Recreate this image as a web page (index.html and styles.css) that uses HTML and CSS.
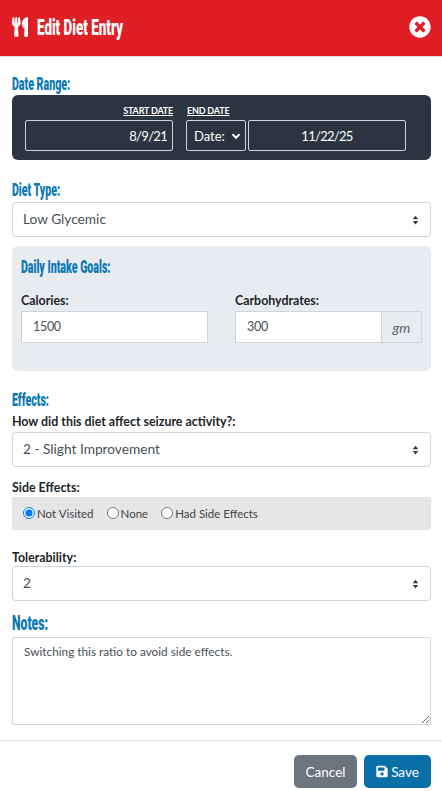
FILE: index.html
```html
<!DOCTYPE html>
<html lang="en">
<head>
<meta charset="utf-8">
<title>Edit Diet Entry</title>
<link rel="stylesheet" href="styles.css">
</head>
<body>
<header class="modal-header">
  <svg class="icon-utensils" viewBox="0 0 416 512"><path fill="#fff" d="M207.9 15.2c.8 4.7 16.1 94.5 16.1 128.8 0 52.3-27.8 89.6-68.9 104.6L168 486.7c.7 13.7-10.2 25.3-24 25.3H80c-13.7 0-24.7-11.5-24-25.3l12.9-238.1C27.7 233.6 0 196.2 0 144 0 109.6 15.3 19.9 16.1 15.2 19.3-5.1 61.4-5.4 64 16.3v141.2c1.3 3.4 15.1 3.2 16 0 1.4-25.3 7.9-139.2 8-141.8 3.3-20.8 44.7-20.8 47.9 0 .2 2.7 6.6 116.5 8 141.8.9 3.2 14.8 3.4 16 0V16.3c2.6-21.6 44.8-21.4 48-1.1zm119.2 285.7l-15 185.1c-1.2 14 9.9 26 23.9 26h56c13.3 0 24-10.7 24-24V24c0-13.2-10.7-24-24-24-82.5 0-221.4 178.5-64.9 300.9z"/></svg>
  <h1 class="modal-title">Edit Diet Entry</h1>
  <svg class="icon-close" viewBox="0 0 512 512"><path fill="#fff" d="M256 8C119 8 8 119 8 256s111 248 248 248 248-111 248-248S393 8 256 8zm121.6 313.1c4.7 4.7 4.7 12.3 0 17L338 377.6c-4.7 4.7-12.3 4.7-17 0L256 312l-65.1 65.6c-4.7 4.7-12.3 4.7-17 0L134.4 338c-4.7-4.7-4.7-12.3 0-17l65.6-65-65.6-65.1c-4.7-4.7-4.7-12.3 0-17l39.6-39.6c4.7-4.7 12.3-4.7 17 0l65 65.7 65.1-65.6c4.7-4.7 12.3-4.7 17 0l39.6 39.6c4.7 4.7 4.7 12.3 0 17L312 256l65.6 65.1z"/></svg>
</header>

<main class="modal-body">
  <h2 class="section"><span>Date Range:</span></h2>
  <section class="date-panel">
    <div class="date-start">
      <span class="date-label">START DATE</span>
      <input class="date-input align-right" type="text" value="8/9/21">
    </div>
    <div class="date-end">
      <span class="date-label">END DATE</span>
      <div class="date-end-row">
        <select class="date-select"><option>Date:</option></select>
        <input class="date-input date-input-end" type="text" value="11/22/25">
      </div>
    </div>
  </section>

  <h2 class="section section-diet"><span>Diet Type:</span></h2>
  <select class="control select"><option>Low Glycemic</option></select>

  <section class="goals">
    <h3 class="section section-goals"><span>Daily Intake Goals:</span></h3>
    <div class="goals-grid">
      <div class="goal goal-cal">
        <label class="field-label">Calories:</label>
        <input class="goal-input" type="text" value="1500">
      </div>
      <div class="goal goal-carb">
        <label class="field-label">Carbohydrates:</label>
        <div class="input-group">
          <input class="goal-input grouped" type="text" value="300">
          <span class="addon">gm</span>
        </div>
      </div>
    </div>
  </section>

  <h2 class="section section-effects"><span>Effects:</span></h2>
  <label class="field-label label-how">How did this diet affect seizure activity?:</label>
  <select class="control select"><option>2 - Slight Improvement</option></select>

  <label class="field-label label-side">Side Effects:</label>
  <div class="radio-bar">
    <label class="radio"><input type="radio" name="side" checked>Not Visited</label>
    <label class="radio"><input type="radio" name="side">None</label>
    <label class="radio"><input type="radio" name="side">Had Side Effects</label>
  </div>

  <label class="field-label label-tol">Tolerability:</label>
  <select class="control select"><option>2</option></select>

  <h2 class="section section-notes"><span>Notes:</span></h2>
  <textarea class="notes">Switching this ratio to avoid side effects.</textarea>
</main>

<footer class="modal-footer">
  <button class="btn btn-cancel" type="button">Cancel</button>
  <button class="btn btn-save" type="button"><svg class="icon-save" viewBox="0 0 448 512"><path fill="#fff" d="M433.941 129.941l-83.882-83.882A48 48 0 0 0 316.118 32H48C21.49 32 0 53.49 0 80v352c0 26.51 21.49 48 48 48h352c26.51 0 48-21.49 48-48V163.882a48 48 0 0 0-14.059-33.941zM224 416c-35.346 0-64-28.654-64-64 0-35.346 28.654-64 64-64s64 28.654 64 64c0 35.346-28.654 64-64 64zm96-304.52V212c0 6.627-5.373 12-12 12H76c-6.627 0-12-5.373-12-12V108c0-6.627 5.373-12 12-12h228.52c3.183 0 6.235 1.264 8.485 3.515l3.48 3.48A11.996 11.996 0 0 1 320 111.48z"/></svg>Save</button>
</footer>
</body>
</html>
```

FILE: styles.css
```css
* { box-sizing: border-box; }
html, body { margin: 0; padding: 0; height: 791px; overflow: hidden; }
body {
  background: #fff;
  font-family: Lato, "Noto Sans", sans-serif;
  font-size: 14px;
  color: #212529;
}

.modal-header {
  height: 57px;
  background: #e01e26;
  border-bottom: 1px solid #dee2e6;
  display: flex;
  align-items: center;
  padding: 0 12px;
}
.icon-utensils { width: 16px; height: 20px; flex: none; margin-top: -2px; }
.modal-title {
  margin: -1px 0 0 9px;
  font: 900 22px/24px Roboto, sans-serif;
  color: #fff;
  transform: scaleX(.61);
  transform-origin: left center;
  white-space: nowrap;
  flex: 1;
}
.icon-close { width: 22px; height: 22px; flex: none; margin: -2px -1px 0 0; }

.modal-body { padding: 17px 11px 0 12px; }

.section {
  margin: 0;
  height: 21px;
  font: 900 18px/20px Roboto, sans-serif;
  color: #0a78b5;
  white-space: nowrap;
}
.section span { display: inline-block; transform: scaleX(.59); transform-origin: left center; }

.date-panel {
  height: 65px;
  background: #2b3440;
  border-radius: 6px;
  padding: 8px 0 0 13px;
  display: flex;
  gap: 13px;
}
.date-start { width: 148px; display: flex; flex-direction: column; align-items: flex-end; }
.date-end { display: flex; flex-direction: column; }
.date-label {
  font-size: 9px;
  line-height: 15px;
  margin-bottom: 2px;
  letter-spacing: -.2px;
  color: #fff;
  text-decoration: underline;
  font-weight: 700;
}
.date-end .date-label { padding-left: 1px; }
.date-input, .date-select {
  height: 31px;
  background: #2b3440;
  border: 1px solid #ced4da;
  border-radius: 2px;
  color: #fff;
  font: 13px Lato, sans-serif;
  outline: 0;
}
.date-input { width: 148px; padding: 0 5px; letter-spacing: -.7px; }
.align-right { text-align: right; }
.date-end-row { display: flex; gap: 2px; }
.date-select {
  width: 60px;
  padding: 0 0 0 7px;
  appearance: none;
  background-image: url("data:image/svg+xml,%3Csvg xmlns='http://www.w3.org/2000/svg' viewBox='0 0 10 10'%3E%3Cpath d='M1.5 3.2 5 6.8l3.5-3.6' fill='none' stroke='%23fff' stroke-width='2'/%3E%3C/svg%3E");
  background-repeat: no-repeat;
  background-position: right 4px center;
  background-size: 10px 10px;
}
.date-input-end { width: 158px; text-align: center; }

.control {
  display: block;
  width: 100%;
  background-color: #fff;
  border: 1px solid #ced4da;
  border-radius: 4px;
  color: #495057;
  font: 13.7px Lato, sans-serif;
  outline: 0;
}
.select {
  height: 35px;
  padding: 0 10px 2px;
  appearance: none;
  background-image: url("data:image/svg+xml,%3Csvg xmlns='http://www.w3.org/2000/svg' viewBox='0 0 8 12'%3E%3Cpath d='M4 1 7.2 5H.8zM4 11 .8 7h6.4z' fill='%23343a40'/%3E%3C/svg%3E");
  background-repeat: no-repeat;
  background-position: right 11px center;
  background-size: 7px 12px;
}

.section-diet { margin-top: 20px; margin-bottom: 1px; }

.goals {
  margin-top: 9px;
  height: 125px;
  background: #e9ecef;
  border-radius: 6px;
  padding: 11px 9px 0;
}
.goals-grid { display: flex; gap: 27px; margin-top: 15px; }
.goal-cal { width: 187px; }
.goal-carb { width: 187px; }
.field-label {
  display: block;
  font-weight: 700;
  font-size: 12.4px;
  line-height: 16px;
  color: #212529;
  white-space: nowrap;
}
.goal .field-label { margin-bottom: 2px; }
.goal-input {
  display: block;
  width: 100%;
  height: 32px;
  background: #fff;
  border: 1px solid #ced4da;
  border-radius: 0;
  padding: 0 11px 1px;
  color: #495057;
  font: 12.5px Lato, sans-serif;
  letter-spacing: -.3px;
  outline: 0;
}
.input-group { display: flex; }
.grouped { width: 147px; flex: none; }
.addon {
  width: 41px;
  flex: none;
  height: 32px;
  margin-left: -1px;
  background: #e9ecef;
  border: 1px solid #ced4da;
  color: #5c636a;
  font-style: italic;
  font-size: 14px;
  display: flex;
  align-items: center;
  justify-content: center;
}

.section-effects { margin-top: 19px; }
.label-how { margin-top: 3px; margin-bottom: 2px; }
.label-side { margin-top: 13px; margin-bottom: 1px; }
.radio-bar {
  height: 33px;
  background: #e6e6e6;
  padding: 0 11px;
  display: flex;
  align-items: center;
  gap: 13px;
}
.radio {
  display: flex;
  align-items: center;
  font-size: 11.5px;
  color: #3d4247;
}
.radio input { margin: 0 2px 2px 0; width: 12px; height: 12px; accent-color: #0075ff; }

.label-tol { margin-top: 20px; margin-bottom: 0; }
.section-notes { margin-top: 12px; margin-bottom: 3px; font-size: 21px; }
.section-notes span { transform: scaleX(.58); }
.notes {
  display: block;
  width: 100%;
  height: 88px;
  padding: 6px 11px;
  border: 1px solid #ced4da;
  border-radius: 2px;
  color: #495057;
  font: 11.8px/16px Lato, sans-serif;
  outline: 0;
}

.modal-footer {
  margin-top: 15px;
  border-top: 1px solid #dee2e6;
  padding: 14px 11px 0 0;
  display: flex;
  justify-content: flex-end;
  gap: 7px;
}
.btn {
  height: 33px;
  border: 0;
  border-radius: 5px;
  color: #fff;
  font: 13.5px Lato, sans-serif;
  display: flex;
  align-items: center;
  justify-content: center;
}
.btn-cancel { width: 63px; background: #6c757d; }
.btn-save { width: 67px; background: #0a6ea8; gap: 3px; }
.icon-save { width: 12px; height: 13px; }
```
